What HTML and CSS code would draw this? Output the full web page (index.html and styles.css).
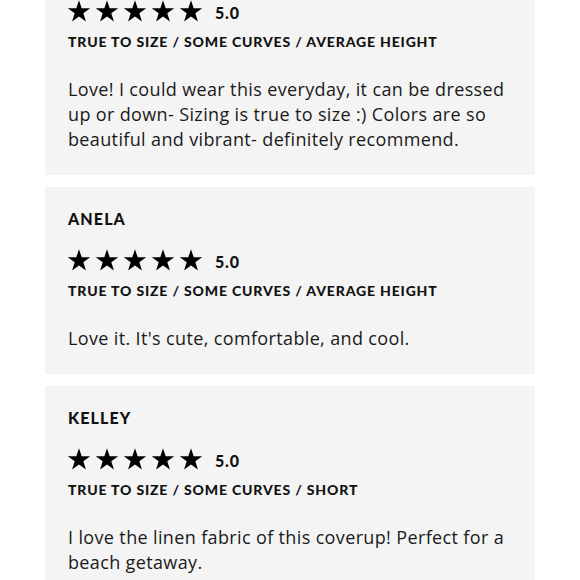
FILE: index.html
```html
<!DOCTYPE html>
<html>
<head>
<meta charset="utf-8">
<link rel="stylesheet" href="styles.css">
</head>
<body>
<svg width="0" height="0" class="defs">
  <defs>
    <symbol id="star" viewBox="0 0 24 24">
      <path d="M12 1.2 L14.7 9.3 L23.2 9.3 L16.3 14.3 L18.9 22.5 L12 17.5 L5.1 22.5 L7.7 14.3 L0.8 9.3 L9.3 9.3 Z"/>
    </symbol>
  </defs>
</svg>
<div class="list">
  <div class="card">
    <div class="name">JESS</div>
    <div class="rating">
      <div class="stars">
        <svg class="star"><use href="#star"/></svg><svg class="star"><use href="#star"/></svg><svg class="star"><use href="#star"/></svg><svg class="star"><use href="#star"/></svg><svg class="star"><use href="#star"/></svg>
      </div>
      <span class="score">5.0</span>
    </div>
    <div class="fit">TRUE TO SIZE / SOME CURVES / AVERAGE HEIGHT</div>
    <p class="body">Love! I could wear this everyday, it can be dressed up or down- Sizing is true to size :) Colors are so beautiful and vibrant- definitely recommend.</p>
  </div>
  <div class="card">
    <div class="name">ANELA</div>
    <div class="rating">
      <div class="stars">
        <svg class="star"><use href="#star"/></svg><svg class="star"><use href="#star"/></svg><svg class="star"><use href="#star"/></svg><svg class="star"><use href="#star"/></svg><svg class="star"><use href="#star"/></svg>
      </div>
      <span class="score">5.0</span>
    </div>
    <div class="fit">TRUE TO SIZE / SOME CURVES / AVERAGE HEIGHT</div>
    <p class="body">Love it. It's cute, comfortable, and cool.</p>
  </div>
  <div class="card">
    <div class="name">KELLEY</div>
    <div class="rating">
      <div class="stars">
        <svg class="star"><use href="#star"/></svg><svg class="star"><use href="#star"/></svg><svg class="star"><use href="#star"/></svg><svg class="star"><use href="#star"/></svg><svg class="star"><use href="#star"/></svg>
      </div>
      <span class="score">5.0</span>
    </div>
    <div class="fit">TRUE TO SIZE / SOME CURVES / SHORT</div>
    <p class="body">I love the linen fabric of this coverup! Perfect for a beach getaway.</p>
  </div>
</div>
</body>
</html>
```

FILE: styles.css
```css
html, body {
  margin: 0;
  padding: 0;
  background: #ffffff;
  overflow: hidden;
}
.defs {
  position: absolute;
  width: 0;
  height: 0;
}
.list {
  display: flex;
  flex-direction: column;
  gap: 12px;
  width: 490px;
  margin: -62px 0 0 45px;
}
.card {
  background: #f4f4f4;
  padding: 23px 23px 23px;
  color: #111;
}
.name {
  font-family: "Lato", sans-serif;
  font-weight: 900;
  font-size: 16px;
  line-height: 18px;
  letter-spacing: 0.07em;
}
.rating {
  display: flex;
  align-items: center;
  margin-top: 19px;
  height: 25px;
}
.stars {
  display: flex;
  gap: 4px;
  margin-left: -1px;
}
.star {
  width: 24px;
  height: 24px;
  fill: #000;
}
.score {
  font-family: "Lato", sans-serif;
  font-weight: 900;
  font-size: 16px;
  letter-spacing: 0.05em;
  margin-left: 12px;
  padding-top: 3px;
}
.fit {
  font-family: "Lato", sans-serif;
  font-weight: 900;
  font-size: 14px;
  line-height: 16px;
  letter-spacing: 0.06em;
  margin-top: 11px;
}
.body {
  font-family: "Open Sans", sans-serif;
  font-size: 18px;
  line-height: 25px;
  letter-spacing: 0.02em;
  color: #1a1a1a;
  margin: 27px 0 0;
}
```
